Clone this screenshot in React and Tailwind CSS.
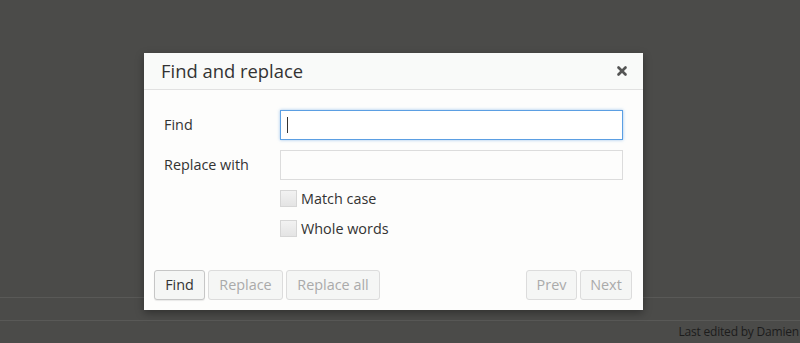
import { X } from "lucide-react";

export default function App() {
  return (
    <div
      className="relative w-[800px] h-[343px] bg-[#4b4b49] flex flex-col overflow-hidden"
      style={{ fontFamily: '"Open Sans", "Liberation Sans", sans-serif' }}
    >
      {/* page behind the overlay */}
      <div className="flex-1" />
      <div className="h-[23px] border-t border-[#595957]" />
      <div className="h-[23px] border-t border-[#595957] flex items-center justify-end pr-[1px]">
        <span className="text-[12px] tracking-[-0.2px] text-[#1c1c1c] whitespace-nowrap">Last edited by Damien</span>
      </div>

      {/* dialog */}
      <div className="absolute left-[144px] top-[53px] w-[499px] h-[257px] bg-[#fdfdfc] shadow-[0_3px_8px_rgba(0,0,0,0.35)] flex flex-col">
        <div className="h-[37px] bg-[#f9faf9] border-b border-[#e1e1e1] flex items-center justify-between pl-[17px] pr-[14px]">
          <h1 className="text-[18.4px] text-[#333] leading-none">Find and replace</h1>
          <X className="w-[14px] h-[14px] text-[#555]" strokeWidth={4.5} />
        </div>

        <div className="flex-1 flex flex-col pt-[20px] pl-[20px] pr-[20px] text-[14.4px] text-[#333]">
          <div className="flex items-center h-[30px]">
            <label className="w-[116px]">Find</label>
            <div className="flex-1 h-[30px] border border-[#5b9fe3] shadow-[0_0_3px_rgba(94,160,228,0.6)] bg-white flex items-center pl-[6px]">
              <div className="w-px h-[16px] bg-[#333]" />
            </div>
          </div>

          <div className="flex items-center h-[30px] mt-[10px]">
            <label className="w-[116px]">Replace with</label>
            <div className="flex-1 h-[30px] border border-[#dcdcdc] bg-[#fdfdfc]" />
          </div>

          <div className="flex flex-col gap-[13px] mt-[10px] pl-[116px]">
            <div className="flex items-center gap-[4px] h-[17px]">
              <div className="w-[17px] h-[17px] border border-[#d6d6d6] bg-gradient-to-b from-[#f2f2f2] to-[#e4e4e4]" />
              <span>Match case</span>
            </div>
            <div className="flex items-center gap-[4px] h-[17px]">
              <div className="w-[17px] h-[17px] border border-[#d6d6d6] bg-gradient-to-b from-[#f2f2f2] to-[#e4e4e4]" />
              <span>Whole words</span>
            </div>
          </div>
        </div>

        <div className="flex items-center justify-between pl-[10px] pr-[11px] pb-[10px] text-[14.4px]">
          <div className="flex gap-[3px]">
            <button className="h-[30px] w-[51px] border border-[#c6c6c6] rounded-[3px] bg-[#f5f6f5] text-[#333] shadow-[0_1px_1px_rgba(0,0,0,0.08)]">Find</button>
            <button className="h-[30px] w-[75px] border border-[#dcdcdc] rounded-[3px] bg-[#f5f6f5] text-[#aaa]">Replace</button>
            <button className="h-[30px] w-[94px] border border-[#dcdcdc] rounded-[3px] bg-[#f5f6f5] text-[#aaa]">Replace all</button>
          </div>
          <div className="flex gap-[3px]">
            <button className="h-[30px] w-[51px] border border-[#dcdcdc] rounded-[3px] bg-[#f5f6f5] text-[#aaa]">Prev</button>
            <button className="h-[30px] w-[52px] border border-[#dcdcdc] rounded-[3px] bg-[#f5f6f5] text-[#aaa]">Next</button>
          </div>
        </div>
      </div>
    </div>
  );
}
